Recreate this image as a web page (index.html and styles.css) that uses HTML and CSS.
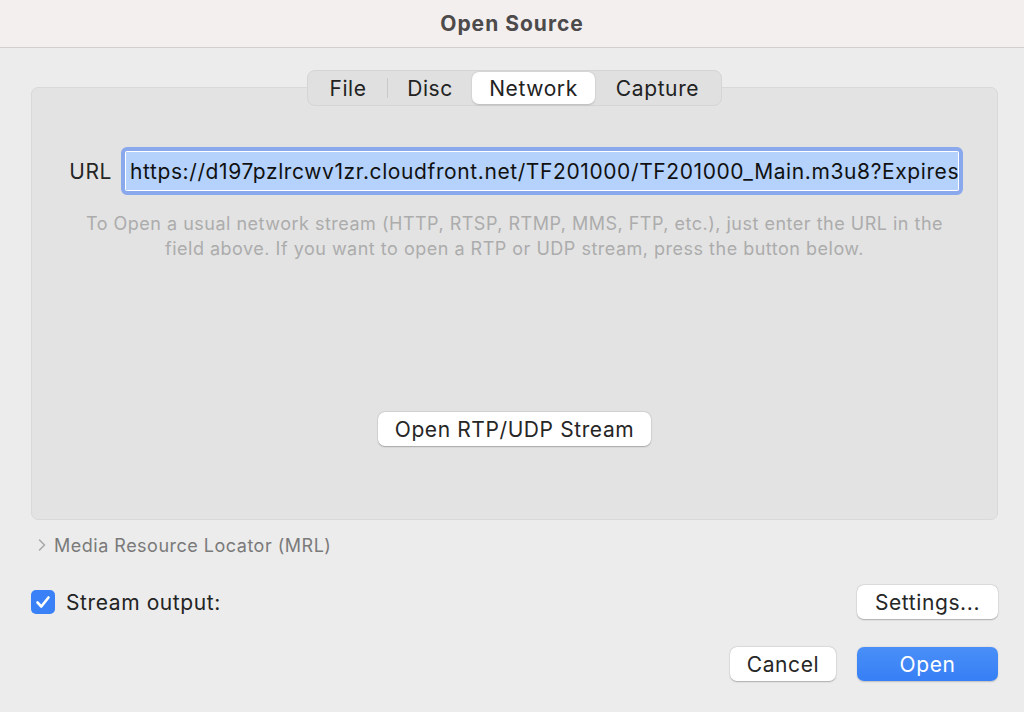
FILE: index.html
```html
<!DOCTYPE html>
<html>
<head>
<meta charset="utf-8">
<link rel="stylesheet" href="styles.css">
</head>
<body>
<div class="window">
  <div class="titlebar">Open Source</div>
  <div class="content">
    <div class="tabs">
      <div class="tab tab-file">File</div>
      <div class="sep"></div>
      <div class="tab tab-disc">Disc</div>
      <div class="tab tab-net active">Network</div>
      <div class="tab tab-cap">Capture</div>
    </div>
    <div class="panel">
      <div class="url-row">
        <div class="url-label">URL</div>
        <div class="url-field">
          <div class="url-inner"><span class="url-text">https://d197pzlrcwv1zr.cloudfront.net/TF201000/TF201000_Main.m3u8?Expires</span></div>
        </div>
      </div>
      <p class="help">To Open a usual network stream (HTTP, RTSP, RTMP, MMS, FTP, etc.), just enter the URL in the<br>field above. If you want to open a RTP or UDP stream, press the button below.</p>
      <div class="rtp-row"><div class="btn btn-rtp">Open RTP/UDP Stream</div></div>
    </div>
    <div class="mrl-row">
      <svg class="chev" width="10" height="14" viewBox="0 0 10 14"><path d="M2.5 2 L7.5 7 L2.5 12" fill="none" stroke="#a9a9a9" stroke-width="1.6" stroke-linecap="round" stroke-linejoin="round"/></svg>
      <span class="mrl-text">Media Resource Locator (MRL)</span>
    </div>
    <div class="stream-row">
      <div class="check-wrap">
        <div class="checkbox"><svg width="24" height="24" viewBox="0 0 24 24"><path d="M6.5 12.5 L10.3 16.5 L17.5 7.5" fill="none" stroke="#fff" stroke-width="2.6" stroke-linecap="round" stroke-linejoin="round"/></svg></div>
        <span class="stream-label">Stream output:</span>
      </div>
      <div class="btn btn-settings">Settings...</div>
    </div>
    <div class="action-row">
      <div class="btn btn-cancel">Cancel</div>
      <div class="btn btn-open">Open</div>
    </div>
  </div>
</div>
</body>
</html>
```
FILE: styles.css
```css
html, body {
  margin: 0;
  padding: 0;
}
body {
  width: 1024px;
  height: 712px;
  overflow: hidden;
  background: #ececec;
  font-family: "Inter", "Noto Sans", sans-serif;
  color: #262626;
  letter-spacing: 0.6px;
}
.window {
  width: 1024px;
  height: 712px;
  display: flex;
  flex-direction: column;
}
.titlebar {
  height: 47px;
  border-bottom: 1px solid #d3cfcf;
  background: #f4efef;
  display: flex;
  align-items: center;
  justify-content: center;
  font-size: 21px;
  font-weight: 700;
  color: #4c4a4a;
  letter-spacing: 1px;
}
.content {
  flex: 1;
  display: flex;
  flex-direction: column;
  padding: 0 26px 0 31px;
}
.tabs {
  align-self: center;
  margin-top: 22px;
  height: 34px;
  padding: 0 1px;
  display: flex;
  align-items: center;
  background: #e0e0e0;
  border: 1px solid #d5d5d5;
  border-radius: 8px;
  position: relative;
  z-index: 2;
  font-size: 21px;
  color: #222;
}
.tab {
  height: 32px;
  display: flex;
  align-items: center;
  justify-content: center;
  border-radius: 7px;
}
.tab-file { width: 78px; }
.tab-disc { width: 84px; }
.tab-net { width: 123px; }
.tab-cap { width: 125px; }
.tab.active {
  background: #fff;
  box-shadow: 0 0.5px 2px rgba(0,0,0,0.18);
}
.sep {
  width: 1px;
  height: 20px;
  background: #c9c9c9;
}
.panel {
  margin-top: -19px;
  height: 431px;
  background: #e3e3e3;
  border: 1px solid #d9d9d9;
  border-radius: 7px;
  display: flex;
  flex-direction: column;
}
.url-row {
  margin-top: 59px;
  display: flex;
  align-items: center;
}
.url-label {
  width: 80px;
  text-align: right;
  font-size: 21px;
  color: #262626;
  margin-right: 9px;
}
.url-field {
  width: 832px;
  height: 38px;
  border: 4px solid #8aa8ec;
  border-radius: 6px;
  background: #fff;
  padding: 1px;
  box-sizing: content-box;
  display: flex;
}
.url-inner {
  flex: 1;
  background: #b4d2fb;
  overflow: hidden;
  white-space: nowrap;
  display: flex;
  align-items: center;
  padding-left: 4px;
  font-size: 21px;
  color: #111;
}
.help {
  margin: 16px 0 0 0;
  text-align: center;
  font-size: 18px;
  line-height: 25px;
  letter-spacing: 0.5px;
  color: #acacac;
}
.rtp-row {
  margin-top: 151px;
  display: flex;
  justify-content: center;
}
.btn {
  height: 34px;
  background: #fff;
  border-radius: 7px;
  box-shadow: 0 0.5px 1.5px rgba(0,0,0,0.25), 0 0 0 0.5px rgba(0,0,0,0.06);
  display: flex;
  align-items: center;
  justify-content: center;
  font-size: 21px;
  color: #262626;
}
.btn-rtp { width: 273px; }
.mrl-row {
  margin-top: 13px;
  display: flex;
  align-items: center;
  height: 24px;
  padding-left: 6px;
}
.chev { margin-right: 7px; }
.mrl-text {
  font-size: 18px;
  letter-spacing: 0.5px;
  color: #7a7a7a;
}
.stream-row {
  margin-top: 28px;
  display: flex;
  align-items: center;
  justify-content: space-between;
}
.check-wrap {
  display: flex;
  align-items: center;
}
.checkbox {
  width: 24px;
  height: 24px;
  border-radius: 5px;
  background: #3a80f6;
  display: flex;
}
.stream-label {
  margin-left: 11px;
  font-size: 21px;
  color: #232323;
}
.btn-settings { width: 141px; }
.action-row {
  margin-top: 28px;
  display: flex;
  justify-content: flex-end;
  gap: 21px;
}
.btn-cancel { width: 106px; }
.btn-open {
  width: 141px;
  background: linear-gradient(#4a8ff8, #367ff5);
  color: #fff;
  box-shadow: 0 0.5px 1.5px rgba(0,0,0,0.2);
}
```
